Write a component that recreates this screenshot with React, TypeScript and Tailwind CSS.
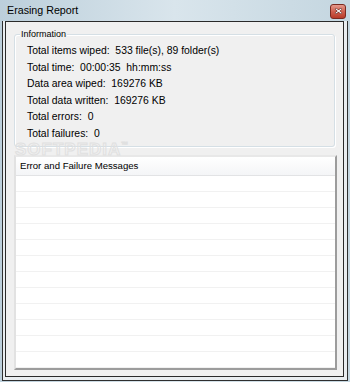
const font = { fontFamily: '"Liberation Sans", Arial, sans-serif' }

const info = [
  'Total items wiped:  533 file(s), 89 folder(s)',
  'Total time:  00:00:35  hh:mm:ss',
  'Data area wiped:  169276 KB',
  'Total data written:  169276 KB',
  'Total errors:  0',
  'Total failures:  0',
]

export default function App() {
  const rows = Array.from({ length: 12 })

  return (
    <div
      className="relative w-[350px] h-[382px] overflow-hidden bg-gradient-to-r from-[#bccfdb] via-[#d9e5ec] to-[#c4d6e0] text-[10.4px] text-black"
      style={font}
    >
      {/* title bar */}
      <div className="h-[21px] flex items-center justify-between pl-[7px] pr-[4px]">
        <span className="text-[10.7px] leading-none">Erasing Report</span>
        <div className="w-[16px] h-[15px] mt-[1px] rounded-[3px] border border-[#7a2a20] bg-gradient-to-b from-[#e4998d] via-[#cf5f4e] to-[#b83a28] flex items-center justify-center">
          <svg width="7" height="6" viewBox="0 0 7 6">
            <path d="M1 1 L6 5 M6 1 L1 5" stroke="#5a1a12" strokeWidth="2.2" strokeLinecap="square" />
            <path d="M1 1 L6 5 M6 1 L1 5" stroke="#fff" strokeWidth="1.1" strokeLinecap="square" />
          </svg>
        </div>
      </div>

      {/* frame */}
      <div className="mx-[2px] h-[360px] flex flex-col border-x border-b border-[#2e2e2e] bg-[#e9edf0] pl-[2px] pr-[3px] pb-[3px]">
        <div className="flex-1 flex flex-col border border-[#2a2a2a] bg-[#f0f0f0]">
          {/* Information group */}
          <div className="relative mt-[12px] mx-[8px] rounded-[3px] border border-[#d5dfe5] pt-[8px] pb-[4px] pl-[12px] shadow-[inset_1px_1px_0_#fff,1px_1px_0_#fff]">
            <span className="absolute -top-[8px] left-[5px] px-[1px] bg-[#f0f0f0] text-[9px] leading-[14px]">Information</span>
            {info.map(t => (
              <div key={t} className="h-[16.5px] leading-[16.5px] whitespace-pre">
                {t}
              </div>
            ))}
          </div>

          {/* messages list */}
          <div className="flex-1 mt-[8px] ml-[8px] mr-[6px] mb-[6px] flex flex-col border-2 border-l-[#e2e2e2] border-t-[#e8e8e8] border-r-[#9c9c9c] border-b-[#9c9c9c] bg-white overflow-hidden">
            <div className="h-[19px] shrink-0 flex items-center pl-[4px] text-[9.6px] bg-gradient-to-b from-white to-[#f4f5f7] border-b border-[#e2e3e5]">
              Error and Failure Messages
            </div>
            {rows.map((_, i) => (
              <div key={i} className="h-[16px] shrink-0 border-b border-[#f1f1f1]" />
            ))}
          </div>
        </div>
      </div>

      {/* watermark */}
      <div className="absolute left-[15px] top-[141px] text-[17px] leading-none font-bold tracking-[1px] text-transparent [-webkit-text-stroke:1px_#e0e0e0] pointer-events-none select-none">
        SOFTPEDIA<span className="text-[7px] align-top">™</span>
      </div>
    </div>
  )
}
